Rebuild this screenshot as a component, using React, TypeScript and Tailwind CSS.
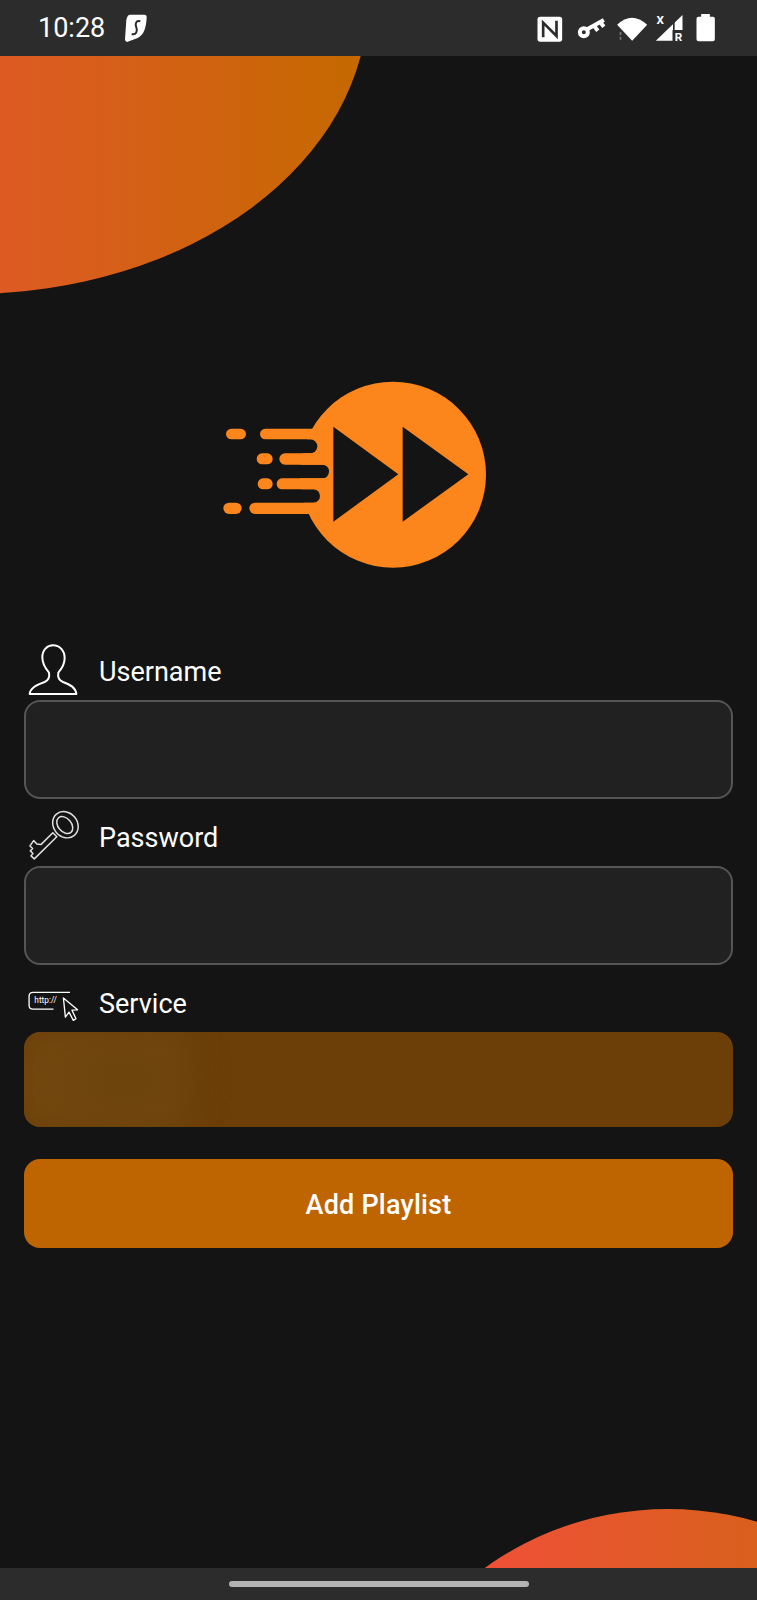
const UserIcon = () => (
  <svg width="50" height="52" viewBox="55 40 150 156" fill="none" stroke="white" strokeWidth="6" strokeLinejoin="round">
    <path d="M60 190C62 172 78 164 105 154C116 149 121 142 118 126C106 112 98 98 98 80C98 58 112 44 130 44C150 44 165 60 165 82C165 98 158 112 146 126C143 142 148 149 160 154C185 163 198 172 200 190Z" />
  </svg>
);

const KeyIcon = () => (
  <svg width="53" height="50" viewBox="50 30 160 150" fill="none" stroke="#e0e0e0" strokeWidth="4.5" strokeLinejoin="round">
    <ellipse cx="166" cy="74" rx="36" ry="42" transform="rotate(-40 166 74)" />
    <ellipse cx="164" cy="75" rx="20" ry="29" transform="rotate(-40 164 75)" />
    <path d="M128 98L140 110L72 177L62 168L68 161L60 153L67 146L59 138L70 122L80 132L92 134Z" />
  </svg>
);

const HttpIcon = () => (
  <svg width="53" height="33" viewBox="50 60 160 100" fill="none" stroke="white" strokeWidth="4">
    <path d="M180 67H68Q56 67 56 79V106Q56 118 68 118H130" />
    <text x="72" y="100" fill="white" stroke="none" fontSize="25" fontWeight="400" fontFamily="Roboto, sans-serif">http://</text>
    <path d="M160 84L166 142L177 127L190 152L198 147L186 121L203 120Z" strokeLinejoin="round" />
  </svg>
);

const Logo = () => (
  <svg width="290" height="210" viewBox="0 0 870 630">
    <circle cx="549" cy="314" r="279" fill="#fd861c" />
    <rect x="0" y="208" width="322" height="42" rx="21" fill="#141414" />
    <rect x="0" y="284" width="357" height="41" rx="20" fill="#141414" />
    <rect x="0" y="358" width="330" height="40" rx="20" fill="#141414" />
    <g fill="#fd861c">
      <rect x="48" y="176" width="60" height="32" rx="16" />
      <rect x="150" y="176" width="250" height="32" rx="16" />
      <rect x="140" y="250" width="48" height="33" rx="16" />
      <rect x="208" y="250" width="190" height="34" rx="17" />
      <rect x="143" y="325" width="45" height="33" rx="16" />
      <rect x="200" y="325" width="200" height="33" rx="16" />
      <rect x="40" y="398" width="55" height="34" rx="17" />
      <rect x="118" y="398" width="280" height="34" rx="17" />
    </g>
    <path d="M370 170V455L565 313Z M578 170V455L775 313Z" fill="#141414" />
  </svg>
);

const StatusIcons = () => (
  <svg width="187" height="32" viewBox="100 36 560 96">
    <rect x="113" y="50" width="74" height="75" rx="8" fill="white" />
    <path d="M130 112V68L170 108V62" fill="none" stroke="#2c2c2c" strokeWidth="8" />
    <circle cx="252" cy="97" r="12" fill="none" stroke="white" strokeWidth="12" />
    <path d="M262 88L312 60M283 78L294 92M301 66L312 80" fill="none" stroke="white" strokeWidth="12" />
    <path d="M352 74Q396 32 442 74L397 122Z" fill="white" />
    <path d="M362 96v9M362 110v9" stroke="#777" strokeWidth="5" />
    <path d="M468 122L548 45V122Z" fill="white" />
    <rect x="518" y="90" width="34" height="36" fill="#2c2c2c" />
    <path d="M522 60V90" stroke="#2c2c2c" strokeWidth="5" />
    <text x="470" y="72" fill="white" fontSize="35" fontWeight="700" fontFamily="Roboto, sans-serif">X</text>
    <text x="525" y="123" fill="white" fontSize="35" fontWeight="700" fontFamily="Roboto, sans-serif">R</text>
    <path d="M590 56Q590 50 596 50H604V42H630V50H639Q645 50 645 56V118Q645 124 639 124H596Q590 124 590 118Z" fill="white" />
  </svg>
);

export default function App() {
  return (
    <div className="relative flex h-[1600px] w-full flex-col overflow-hidden bg-[#141414] font-[Roboto,sans-serif] text-white">
      {/* background blobs */}
      <svg className="absolute left-0 top-14" width="400" height="240" viewBox="0 56 400 240">
        <defs>
          <linearGradient id="blobTop" gradientUnits="userSpaceOnUse" x1="0" y1="0" x2="361" y2="0">
            <stop offset="0" stopColor="#de5a24" />
            <stop offset="1" stopColor="#c56900" />
          </linearGradient>
        </defs>
        <ellipse cx="-30" cy="0" rx="398" ry="294" fill="url(#blobTop)" />
      </svg>
      <svg className="absolute bottom-8 right-0" width="300" height="70" viewBox="457 1498 300 70">
        <defs>
          <linearGradient id="blobBottom" gradientUnits="userSpaceOnUse" x1="486" y1="0" x2="757" y2="0">
            <stop offset="0" stopColor="#ef5037" />
            <stop offset="1" stopColor="#d8601c" />
          </linearGradient>
        </defs>
        <ellipse cx="668" cy="1799" rx="303" ry="290" fill="url(#blobBottom)" />
      </svg>

      <header className="relative flex h-14 shrink-0 items-center justify-between bg-[#2c2c2c] pl-[38px] pr-[37px]">
        <div className="flex items-center gap-[20px]">
          <span className="text-[27px] leading-none">10:28</span>
          <svg width="22" height="28" viewBox="0 0 66 84">
            <path d="M14 2H58Q66 2 65 12C63 40 58 62 38 72L6 84Q0 84 0 76L4 18Q6 4 14 2Z" fill="white" />
            <path d="M46 22C32 18 30 30 34 40C38 50 34 64 20 60" fill="none" stroke="#2c2c2c" strokeWidth="6" />
          </svg>
        </div>
        <StatusIcons />
      </header>

      <main className="relative flex-1 pt-[314px]">
        <div className="pl-[210px]">
          <Logo />
        </div>

        <form className="mt-[64px] px-6">
          <div className="flex h-14 items-center pl-[4px]">
            <div className="h-full w-[71px]">
              <UserIcon />
            </div>
            <span className="text-[27px] leading-8">Username</span>
          </div>
          <div className="h-[99px] rounded-2xl border-2 border-[#555555] bg-[#212121]" />

          <div className="mt-[11px] flex h-14 items-center pl-[3px]">
            <div className="h-full w-[72px]">
              <KeyIcon />
            </div>
            <span className="text-[27px] leading-8">Password</span>
          </div>
          <div className="h-[99px] rounded-2xl border-2 border-[#555555] bg-[#212121]" />

          <div className="mt-[11px] flex h-14 items-center pl-[3px]">
            <div className="h-full w-[72px] pt-[14px]">
              <HttpIcon />
            </div>
            <span className="text-[27px] leading-8">Service</span>
          </div>
          <div className="relative h-[95px] overflow-hidden rounded-2xl bg-[#6c3f09]">
            <div className="absolute left-0 top-0 h-full w-[160px] bg-[#744910] blur-lg" />
            <div className="absolute left-[50px] top-[25px] h-[45px] w-[100px] bg-[#6a410b] blur-xl" />
          </div>

          <button type="button" className="mt-8 flex h-[89px] w-full items-center justify-center rounded-2xl bg-[#be6400] pt-[3px] text-[27px] font-medium tracking-[0.2px]">
            Add Playlist
          </button>
        </form>
      </main>

      <nav className="relative flex h-8 shrink-0 items-center justify-center bg-[#2c2c2c]">
        <div className="h-[6px] w-[300px] rounded-full bg-[#b3b3b3]" />
      </nav>
    </div>
  );
}
